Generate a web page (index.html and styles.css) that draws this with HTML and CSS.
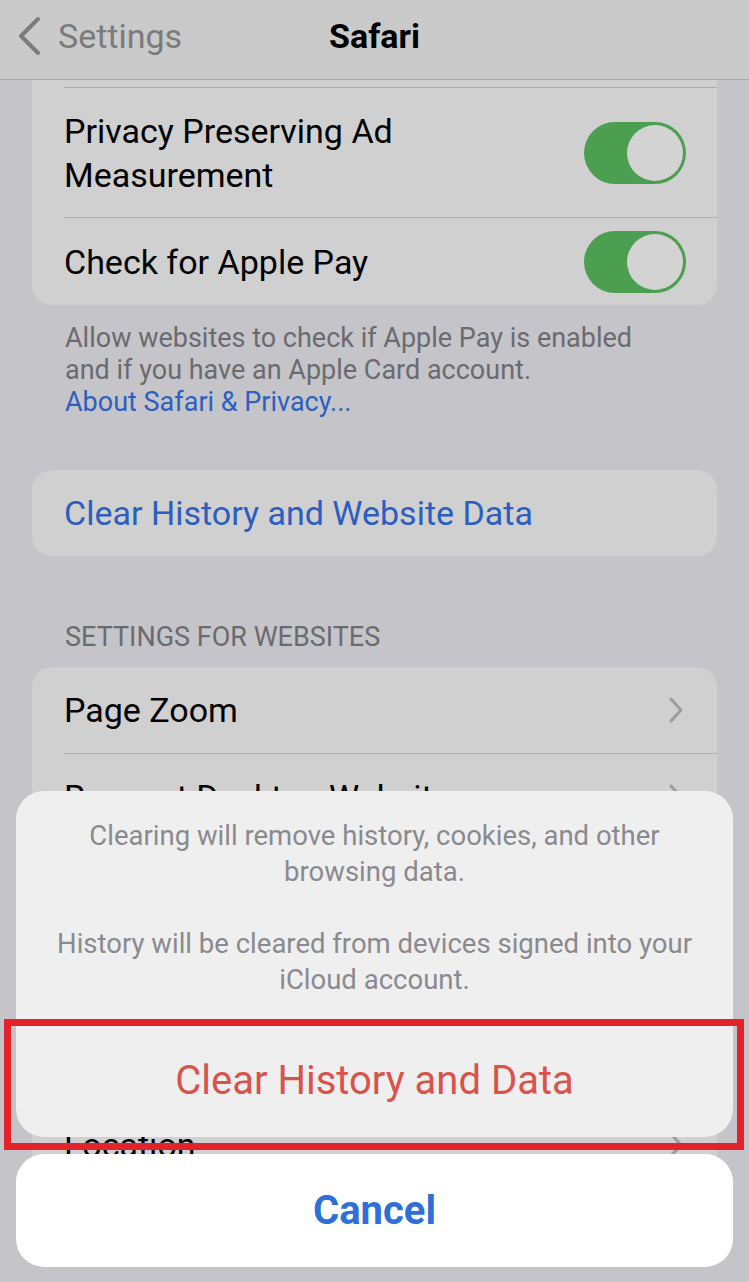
FILE: index.html
```html
<!DOCTYPE html>
<html lang="en">
  <head>
    <meta charset="UTF-8" />
    <meta name="viewport" content="width=device-width, initial-scale=1.0" />
    <title>Safari</title>
    <link rel="stylesheet" href="styles.css">
  </head>

  <body>
    <div class="screen">
      <header class="navbar">
        <a class="back" href="#">
          <svg width="26" height="40" viewBox="0 0 26 40">
            <path d="M22 3 L5 20 L22 37" fill="none" stroke="#7b7b7d" stroke-width="4" stroke-linecap="round" stroke-linejoin="round" />
          </svg>
          <span>Settings</span>
        </a>
        <h1>Safari</h1>
        <span></span>
      </header>

      <main class="content">
        <!-- Privacy group (scrolled) -->
        <section class="group">
          <div class="card card-cut">
            <div class="row row-peek"></div>
            <div class="row row-tall">
              <span class="label">Privacy Preserving Ad<br>Measurement</span>
              <span class="toggle"></span>
            </div>
            <div class="row row-last">
              <span class="label">Check for Apple Pay</span>
              <span class="toggle"></span>
            </div>
          </div>
          <p class="footer">
            Allow websites to check if Apple Pay is enabled<br>
            and if you have an Apple Card account.<br>
            <a href="#">About Safari &amp; Privacy...</a>
          </p>
        </section>

        <section class="group">
          <div class="card">
            <div class="row"><span class="label link">Clear History and Website Data</span></div>
          </div>
        </section>

        <section class="group">
          <h2 class="group-title">Settings for Websites</h2>
          <div class="card">
            <div class="row">
              <span class="label">Page Zoom</span>
              <svg class="chevron" width="16" height="28" viewBox="0 0 16 28"><path d="M3 3 L13 14 L3 25" /></svg>
            </div>
            <div class="row">
              <span class="label">Request Desktop Website</span>
              <svg class="chevron" width="16" height="28" viewBox="0 0 16 28"><path d="M3 3 L13 14 L3 25" /></svg>
            </div>
            <div class="row covered">
              <span class="label">Reader</span>
            </div>
            <div class="row covered">
              <span class="label">Camera</span>
            </div>
            <div class="row covered">
              <span class="label">Microphone</span>
            </div>
            <div class="row">
              <span class="label">Location</span>
              <svg class="chevron" width="16" height="28" viewBox="0 0 16 28"><path d="M3 3 L13 14 L3 25" /></svg>
            </div>
          </div>
        </section>
      </main>

      <!-- Action sheet -->
      <div class="sheet">
        <div class="sheet-group">
          <p class="sheet-message">
            Clearing will remove history, cookies, and other<br>
            browsing data.<br><br>
            History will be cleared from devices signed into your<br>
            iCloud account.
          </p>
          <button class="sheet-action">Clear History and Data</button>
        </div>
        <button class="sheet-cancel">Cancel</button>
      </div>

      <div class="highlight"></div>
    </div>
  </body>
</html>
```

FILE: styles.css
```css
/* General */

body {
  margin: 0;
  padding: 0;
  font-family: Roboto, "Noto Sans", sans-serif;
  background-color: #c4c4c9;
}

.screen {
  position: relative;
  height: 1282px;
  overflow: hidden;
  background-color: #c4c4c9;
}

/* Nav bar */

.navbar {
  display: grid;
  grid-template-columns: 1fr auto 1fr;
  align-items: center;
  height: 80px;
  padding-bottom: 8px;
  box-sizing: border-box;
  background-color: #cacaca;
  border-bottom: 1px solid #a9a9ab;
}

.back {
  display: flex;
  align-items: center;
  gap: 16px;
  padding-left: 16px;
  color: #7b7b7d;
  text-decoration: none;
  font-size: 34px;
}

.navbar h1 {
  margin: 0;
  font-size: 34px;
  font-weight: bold;
  color: #000;
}

/* Groups and cards */

.card {
  margin: 0 32px;
  background-color: #d0d0d0;
  border-radius: 20px;
}

.card-cut {
  border-top-left-radius: 0;
  border-top-right-radius: 0;
}

.row {
  display: flex;
  align-items: center;
  justify-content: space-between;
  min-height: 86px;
  margin-left: 32px;
  padding-right: 31px;
  border-top: 1px solid #adadaf;
}

.row:first-child {
  border-top: none;
}

.row-peek {
  min-height: 7px;
}

.row-tall {
  min-height: 129px;
}

.row-last {
  min-height: 87px;
}

/* rows hidden behind the action sheet */
.row.covered .label {
  visibility: hidden;
}

.label {
  font-size: 34px;
  line-height: 44px;
  color: #000;
}

.label.link {
  color: #2c5ec0;
}

.toggle {
  display: flex;
  justify-content: flex-end;
  width: 102px;
  height: 62px;
  padding: 3px;
  box-sizing: border-box;
  border-radius: 31px;
  background-color: #4c9e50;
}

.toggle::after {
  content: "";
  width: 56px;
  height: 56px;
  border-radius: 50%;
  background-color: #d3d3d3;
}

.chevron {
  margin-right: 2px;
}

.chevron path {
  fill: none;
  stroke: #9c9c9e;
  stroke-width: 3;
  stroke-linecap: round;
  stroke-linejoin: round;
}

.footer {
  margin: 0 0 52px;
  padding: 17px 32px 0 65px;
  font-size: 27px;
  line-height: 32px;
  color: #6b6b6f;
}

.footer a {
  color: #2d5fbf;
  text-decoration: none;
}

.group-title {
  margin: 65px 0 14px;
  padding-left: 65px;
  font-size: 27px;
  line-height: 32px;
  font-weight: normal;
  text-transform: uppercase;
  color: #6b6b6f;
}

/* Action sheet */

.sheet {
  position: absolute;
  left: 16px;
  right: 16px;
  bottom: 15px;
  display: flex;
  flex-direction: column;
  gap: 17px;
}

.sheet-group {
  background-color: #efeff0;
  border-radius: 28px;
  overflow: hidden;
}

.sheet-message {
  margin: 0;
  padding: 27px 20px 24px;
  font-size: 27.5px;
  line-height: 36px;
  text-align: center;
  color: #8a8a8e;
  border-bottom: 1px solid #c9c9cc;
}

.sheet-action,
.sheet-cancel {
  display: block;
  width: 100%;
  border: none;
  font-family: Roboto, "Noto Sans", sans-serif;
  font-size: 40px;
  cursor: pointer;
}

.sheet-action {
  height: 114px;
  background: transparent;
  color: #d9534b;
}

.sheet-cancel {
  height: 113px;
  border-radius: 28px;
  background-color: #fff;
  color: #2f6fd8;
  font-weight: bold;
}

/* Red highlight frame */

.highlight {
  position: absolute;
  left: 4px;
  top: 1019px;
  width: 740px;
  height: 131px;
  box-sizing: border-box;
  border: 7px solid #e3222b;
}
```
